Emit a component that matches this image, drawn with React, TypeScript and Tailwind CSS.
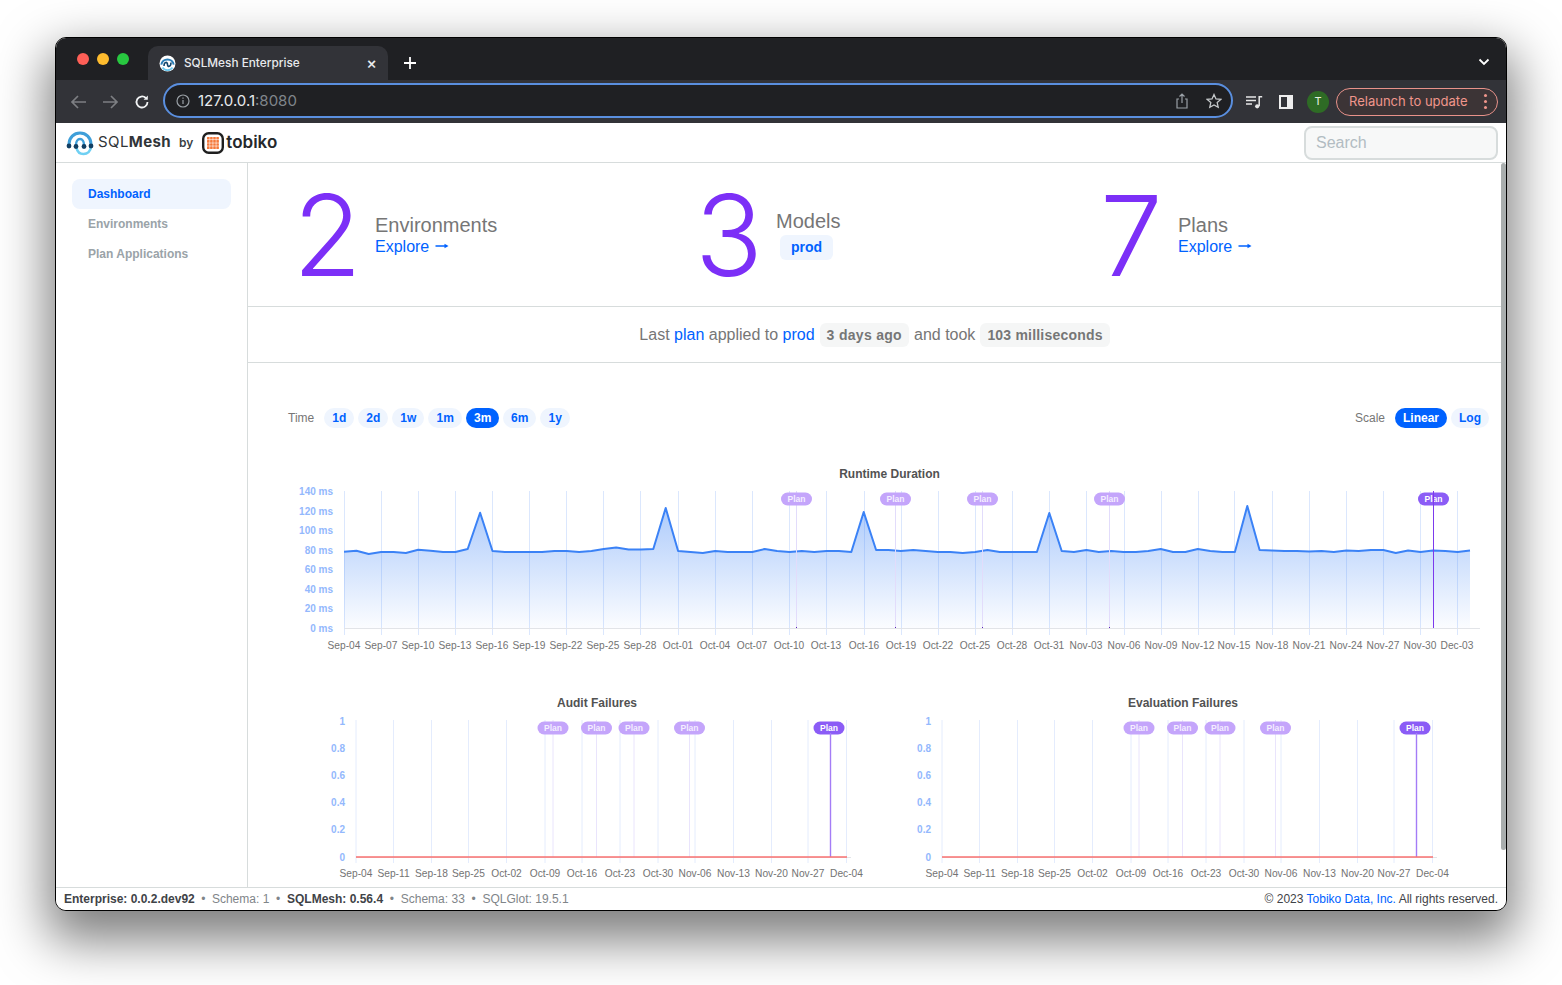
import React from "react";

const sans = "font-['Liberation_Sans',Arial,sans-serif]";
const ui = "font-['Inter',sans-serif]";

const mainLabels = ["Sep-04","Sep-07","Sep-10","Sep-13","Sep-16","Sep-19","Sep-22","Sep-25","Sep-28","Oct-01","Oct-04","Oct-07","Oct-10","Oct-13","Oct-16","Oct-19","Oct-22","Oct-25","Oct-28","Oct-31","Nov-03","Nov-06","Nov-09","Nov-12","Nov-15","Nov-18","Nov-21","Nov-24","Nov-27","Nov-30","Dec-03"];
const mainTicks = [344,381,418,455,492,529,566,603,640,678,715,752,789,826,864,901,938,975,1012,1049,1086,1124,1161,1198,1234,1272,1309,1346,1383,1420,1457];
const series = [551.7,550.7,554,552,552,553,549.7,550.7,552,552,549,512.7,551,552,552,552,552,551,551,552,551,549,547.5,549.5,549.5,549,508,551,552,553,551,552,552,552,549,551,552,551,552,551,551,552,512,550,550,551,550,551,552,552,553,552,550,552,552,552,552,513,551,552,550,552,551,552,552,551,549,552,552,549,551,552,552,506,550,550.5,551,551,551.5,551,552,550.5,551,550,550,553,550.5,552,550.5,551,552,550.5];
const pts = series.map((y, i) => [344 + (i * 1126) / 91, y] as const);
const line = pts.map(([x, y]) => `${x.toFixed(1)},${y}`).join(" ");
const area = `344,628 ${line} 1470,628`;

const subLabels = ["Sep-04","Sep-11","Sep-18","Sep-25","Oct-02","Oct-09","Oct-16","Oct-23","Oct-30","Nov-06","Nov-13","Nov-20","Nov-27","Dec-04"];
const subTicks = [356,393.5,431.5,468.5,506.5,545,582,620,658,695,733.5,771.5,808,846.5];
const subY = [["1",721],["0.8",748],["0.6",775],["0.4",802.5],["0.2",829.5],["0",857]] as const;

function PlanBadge({ x, y, active }: { x: number; y: number; active?: boolean }) {
  return (
    <g>
      <rect x={x - 15.5} y={y - 6.5} width={31} height={13} rx={6.5} fill={active ? "#8b5cf6" : "#c4a5fb"} />
      <text x={x} y={y + 3} textAnchor="middle" fontSize="8.5" fontWeight="700" fill={active ? "#ffffff" : "#f4eeff"}>Plan</text>
    </g>
  );
}

function MainChart() {
  const plans = [796, 895, 982, 1109];
  return (
    <svg viewBox="248 460 1253 195" className={`block w-[1253px] h-[195px] ${sans}`}>
      <defs>
        <linearGradient id="fillArea" x1="0" y1="0" x2="0" y2="1">
          <stop offset="0%" stopColor="#3b82f6" stopOpacity="0.42" />
          <stop offset="100%" stopColor="#3b82f6" stopOpacity="0.02" />
        </linearGradient>
      </defs>
      <text x={889.5} y={478} textAnchor="middle" fontSize="12" fontWeight="700" fill="#525252">Runtime Duration</text>
      {[0,20,40,60,80,100,120,140].map((v, i) => (
        <text key={v} x={333} y={631.5 - i * 19.5} textAnchor="end" fontSize="10" fontWeight="700" fill="#93b8fd">{v} ms</text>
      ))}
      {mainTicks.map((x) => (
        <line key={x} x1={x + 0.5} x2={x + 0.5} y1={491} y2={635} stroke="#dbe7fd" strokeWidth="1" />
      ))}
      <polygon points={area} fill="url(#fillArea)" />
      <line x1={344} x2={1480} y1={628.5} y2={628.5} stroke="#e2e4e8" />
      <polyline points={line} fill="none" stroke="#3b82f6" strokeWidth="2" strokeLinejoin="round" />
      {plans.map((x) => (
        <g key={x}>
          <line x1={x + 0.5} x2={x + 0.5} y1={491} y2={628} stroke="#e2dcfb" />
          <rect x={x} y={627} width={1} height={1} fill="#5b21b6" />
          <PlanBadge x={x + 0.5} y={499} />
        </g>
      ))}
      <PlanBadge x={1433.5} y={499} active />
      <line x1={1433.5} x2={1433.5} y1={491} y2={628} stroke="#7c3aed" strokeWidth="1" />
      {mainLabels.map((l, i) => (
        <text key={l} x={mainTicks[i]} y={648.5} textAnchor="middle" fontSize="10.2" fill="#737373">{l}</text>
      ))}
    </svg>
  );
}

function SubChart({ title, dx, ox, w }: { title: string; dx: number; ox: number; w: number }) {
  const plans = [553, 596.5, 634, 689.5];
  return (
    <svg viewBox={`${ox} 690 ${w} 190`} width={w} height={190} className={`block shrink-0 ${sans}`}>
      <text x={597 + dx} y={707} textAnchor="middle" fontSize="12" fontWeight="700" fill="#525252">{title}</text>
      {subY.map(([l, y]) => (
        <text key={l} x={345 + dx} y={y + 3.5} textAnchor="end" fontSize="10" fontWeight="700" fill="#93b8fd">{l}</text>
      ))}
      {subTicks.map((x) => (
        <line key={x} x1={x + dx} x2={x + dx} y1={720} y2={863} stroke="#e4ecfd" />
      ))}
      <line x1={356 + dx} x2={851 + dx} y1={857.5} y2={857.5} stroke="#e2e4e8" />
      {plans.map((x) => (
        <g key={x}>
          <line x1={x + dx} x2={x + dx} y1={720} y2={857} stroke="#e9e4fc" />
          <PlanBadge x={x + dx} y={728} />
        </g>
      ))}
      <PlanBadge x={829 + dx} y={728} active />
      <line x1={830.5 + dx} x2={830.5 + dx} y1={733} y2={857} stroke="#a47cf6" strokeWidth="1.4" />
      <line x1={356 + dx} x2={847 + dx} y1={857} y2={857} stroke="#f87171" strokeWidth="1.4" />
      {subLabels.map((l, i) => (
        <text key={l} x={subTicks[i] + dx} y={877} textAnchor="middle" fontSize="10.2" fill="#737373">{l}</text>
      ))}
    </svg>
  );
}

function Favicon() {
  return (
    <svg width="17" height="17" viewBox="0 0 17 17">
      <circle cx="8.5" cy="8.5" r="8" fill="#fff" />
      <path d="M2.300 9.600a6.300 6.300 0 0 1 12.400 0" fill="none" stroke="#2b7fb8" strokeWidth="2" />
      <path d="M5 11c0-4.500 3.500-4.500 3.500-1.500S12 12 12 7.500" fill="none" stroke="#12466d" strokeWidth="1.600" />
      <path d="M3.500 12.500a6 6 0 0 0 10 0" fill="none" stroke="#6dc8ee" strokeWidth="1.800" />
    </svg>
  );
}

function SqlMeshLogo() {
  return (
    <svg width="28" height="26" viewBox="0 0 28 26">
      <path d="M3 14C3 7.500 8 3 14 3s11 4.500 11 11" fill="none" stroke="#3f9fd9" strokeWidth="3" />
      <path d="M10 15c0-3.500 1.700-6 4-6s4 2.500 4 6" fill="none" stroke="#3f9fd9" strokeWidth="2.400" />
      <path d="M10.500 18c.8 3.500 3.500 6 7 6 4 0 7-3 7.500-7" fill="none" stroke="#6fd0f3" strokeWidth="2.600" />
      <g fill="#123f63">
        <circle cx="3" cy="16" r="2.400" /><circle cx="10" cy="16.500" r="2.400" /><circle cx="18" cy="16.500" r="2.400" /><circle cx="25" cy="16" r="2.400" />
      </g>
    </svg>
  );
}

function TobikoLogo() {
  const cells = [0, 1, 2, 3];
  return (
    <svg width="22" height="22" viewBox="0 0 22 22">
      <rect x="1.200" y="1.200" width="19.600" height="19.600" rx="5.500" fill="#fff" stroke="#1f1f1f" strokeWidth="2.400" />
      {cells.map((r) => cells.map((c) => (
        <rect key={`${r}-${c}`} x={5 + c * 3.1} y={5 + r * 3.1} width={2.600} height={2.600} rx={0.5} fill="#f5793b" />
      )))}
    </svg>
  );
}

function ChromeIcons() {
  return (
    <div className="flex items-center">
      <svg width="18" height="16" viewBox="0 0 18 16" className="ml-[12px] text-[#e6e6e6]" fill="none" stroke="currentColor" strokeWidth="1.500">
        <path d="M1 3h10M1 6.500h10M1 10h6" />
        <path d="M14.200 12V2.700h3" />
        <circle cx="12.200" cy="12.300" r="2.100" fill="currentColor" stroke="none" />
      </svg>
      <div className="ml-[16px] w-[14px] h-[14px] border-2 border-[#eeeeee] border-r-[6px]" />
      <div className={`ml-[14px] w-[22px] h-[22px] rounded-full bg-[#2e6b25] text-[#e6f2e2] flex items-center justify-center text-[11px] ${ui}`}>T</div>
    </div>
  );
}

function Pill({ children, active, w }: { children: React.ReactNode; active?: boolean; w: string }) {
  return (
    <span className={`${w} h-5 rounded-full flex items-center justify-center text-xs font-bold ${active ? "bg-[#0062ff] text-white" : "bg-[#eff5fe] text-[#0062ff]"}`}>{children}</span>
  );
}

function Arrow() {
  return (
    <svg width="14" height="10" viewBox="0 0 14 10" className="inline-block ml-[6px] mb-[2px]">
      <path d="M0.500 5H12" stroke="#0062ff" strokeWidth="1.300" />
      <path d="M9.500 2.800 13.500 5 9.500 7.200Z" fill="#0062ff" />
    </svg>
  );
}

function Digit({ children, pos }: { children: React.ReactNode; pos: string }) {
  return <span className={`${pos} text-[112px] leading-none text-[#7c2ff7] font-[285] ${ui}`}>{children}</span>;
}

export default function App() {
  return (
    <div className="w-[1562px] h-[985px] bg-white pl-[55px] pt-[37px] overflow-hidden">
      <div className={`w-[1452px] h-[874px] rounded-[11px] border border-black overflow-hidden flex flex-col bg-white shadow-[0_22px_50px_8px_rgba(0,0,0,0.5)] ${sans}`}>
        <div className="h-[42px] shrink-0 bg-[#1f2023] flex items-end relative">
          <div className="flex items-center gap-[8px] pl-[21px] pb-[15px] w-[92px]">
            <span className="w-3 h-3 rounded-full bg-[#fe5f57]" />
            <span className="w-3 h-3 rounded-full bg-[#febc2e]" />
            <span className="w-3 h-3 rounded-full bg-[#28c840]" />
          </div>
          <div className={`w-[240px] h-[34px] rounded-t-[10px] bg-[#323338] flex items-center pl-[11px] pr-[11px] text-[#e8eaed] text-[11.800px] font-medium ${ui}`}>
            <Favicon />
            <span className="ml-[8px] pt-[1px] flex-1">SQLMesh Enterprise</span>
            <span className="text-[#e8eaed] text-[16px] leading-none">×</span>
          </div>
          <svg width="14" height="14" viewBox="0 0 14 14" className="ml-[15px] mb-[10px]"><path d="M7 1v12M1 7h12" stroke="#fff" strokeWidth="1.800" /></svg>
          <svg width="12" height="8" viewBox="0 0 12 8" className="ml-auto mr-[16px] mb-[14px]"><path d="M1.500 1.500 6 6l4.500-4.500" fill="none" stroke="#fff" strokeWidth="1.800" /></svg>
        </div>
        <div className="h-[43px] shrink-0 bg-[#323338] flex items-center relative">
          <svg width="18" height="16" viewBox="0 0 18 16" className="ml-[14px] text-[#7d7f83]" fill="none" stroke="currentColor" strokeWidth="1.700"><path d="M16 8H2M8 2 2 8l6 6" /></svg>
          <svg width="18" height="16" viewBox="0 0 18 16" className="ml-[13px] text-[#7d7f83]" fill="none" stroke="currentColor" strokeWidth="1.700"><path d="M2 8h14M10 2l6 6-6 6" /></svg>
          <svg width="16" height="16" viewBox="0 0 16 16" className="ml-[15px] text-[#f1f3f4]" fill="none" stroke="currentColor" strokeWidth="1.800"><path d="M13.500 8a5.500 5.500 0 1 1-1.700-4" /><path d="M13.800 1.500v4.200H9.600" fill="currentColor" stroke="none" /></svg>
          <div className={`ml-[13px] mb-[2px] w-[1070px] h-[35px] rounded-full border-2 border-[#5a8fdf] bg-[#1f2023] flex items-center pl-[11px] pr-[9px] ${ui}`}>
            <svg width="14" height="14" viewBox="0 0 14 14" fill="none" stroke="#9aa0a6" strokeWidth="1.200"><circle cx="7" cy="7" r="6" /><path d="M7 6v4M7 3.500v1.300" /></svg>
            <span className="ml-[8px] pt-[2px] text-[15px] text-[#e8eaed]">127.0.0.1<span className="text-[#80868b]">:8080</span></span>
            <svg width="14" height="16" viewBox="0 0 14 16" className="ml-auto" fill="none" stroke="#9aa0a6" strokeWidth="1.200"><path d="M4 6H2v9h10V6h-2M7 10V1.500M4.500 3.500 7 1l2.500 2.500" /></svg>
            <svg width="16" height="16" viewBox="0 0 16 16" className="ml-[17px]" fill="none" stroke="#c4c7c9" strokeWidth="1.300"><path d="m8 1.500 2 4.400 4.800.5-3.600 3.200 1 4.700L8 11.900l-4.200 2.400 1-4.700-3.600-3.200 4.800-.5Z" /></svg>
          </div>
          <ChromeIcons />
          <div className={`ml-[7px] w-[162px] h-[28px] rounded-full border border-[#e8928a] bg-[#3c3436] flex items-center pl-[12px] pr-[10px] text-[13px] text-[#f0968c] ${ui}`}>
            <span className="flex-1">Relaunch to update</span>
            <span className="flex flex-col gap-[3px]"><i className="block w-[3px] h-[3px] rounded-full bg-[#f0968c]" /><i className="block w-[3px] h-[3px] rounded-full bg-[#f0968c]" /><i className="block w-[3px] h-[3px] rounded-full bg-[#f0968c]" /></span>
          </div>
        </div>
        <div className="h-[40px] shrink-0 bg-white border-b border-[#d7dcdc] flex items-center pl-[10px] pr-[8px]">
          <SqlMeshLogo />
          <span className={`ml-[4px] text-[15px] text-[#303438] tracking-[0.4px] ${ui}`}>SQL<span className="font-bold">Mesh</span></span>
          <span className={`ml-[8px] text-[12px] font-semibold text-[#3b3f44] ${ui}`}>by</span>
          <span className="ml-[9px]"><TobikoLogo /></span>
          <span className={`ml-[2px] text-[17px] font-semibold text-[#26282b] ${ui}`}>tobiko</span>
          <div className="ml-auto w-[194px] h-[34px] rounded-lg border-2 border-[#d7dcdc] bg-[#f7f8f8] flex items-center pl-[10px] text-[16px] text-[#b2bcc2]">Search</div>
        </div>
        <div className="flex-1 min-h-0 flex relative">
          <div className="w-[192px] shrink-0 border-r border-[#d7dcdc] pt-[16px] px-[16px] flex flex-col text-[12px] font-bold">
            <div className="h-[30px] w-[159px] rounded-lg bg-[#eff5fe] text-[#0062ff] flex items-center pl-[16px]">Dashboard</div>
            <div className="h-[30px] text-[#9aa3a8] flex items-center pl-[16px]">Environments</div>
            <div className="h-[30px] text-[#9aa3a8] flex items-center pl-[16px]">Plan Applications</div>
          </div>
          <div className="flex-1 min-w-0 flex overflow-hidden">
            <div className="w-[1253px] shrink-0 flex flex-col">
              <div className="h-[144px] shrink-0 border-b border-[#d7dcdc] pl-[47px] grid grid-cols-[401px_402px_1fr] items-center">
                <div className="flex items-center">
                  <Digit pos="-ml-[2px] w-[80px]">2</Digit>
                  <div className="ml-[2px]">
                    <div className="text-[20px] leading-[24px] text-[#767676]">Environments</div>
                    <div className="text-[16px] leading-[20px] text-[#0062ff]">Explore<Arrow /></div>
                  </div>
                </div>
                <div className="flex items-center">
                  <Digit pos="-ml-[1px] w-[79px]">3</Digit>
                  <div className="ml-[2px]">
                    <div className="text-[20px] leading-[24px] text-[#767676]">Models</div>
                    <span className="ml-[4px] mt-[2px] flex items-center justify-center w-[53px] h-[25px] rounded-md bg-[#eff5fe] text-[14px] font-bold text-[#0062ff]">prod</span>
                  </div>
                </div>
                <div className="flex items-center">
                  <Digit pos="ml-[2px] w-[76px]">7</Digit>
                  <div className="ml-[2px]">
                    <div className="text-[20px] leading-[24px] text-[#767676]">Plans</div>
                    <div className="text-[16px] leading-[20px] text-[#0062ff]">Explore<Arrow /></div>
                  </div>
                </div>
              </div>
              <div className="h-[56px] shrink-0 pt-[1px] border-b border-[#d7dcdc] flex items-center justify-center text-[16px] text-[#767676]">
                <span>Last <span className="text-[#0062ff]">plan</span> applied to <span className="text-[#0062ff]">prod</span></span>
                <span className="ml-[5px] h-[24px] px-[7px] rounded-md bg-[#f5f6f6] text-[14px] font-bold tracking-[0.3px] flex items-center">3 days ago</span>
                <span className="ml-[5px]">and took</span>
                <span className="ml-[5px] h-[24px] px-[7px] rounded-md bg-[#f5f6f6] text-[14px] font-bold tracking-[0.2px] flex items-center">103 milliseconds</span>
              </div>
              <div className="h-[20px] mt-[45px] shrink-0 pl-[40px] pr-[12px] flex items-center gap-[4px]">
                <span className="text-[12px] text-[#767676] mr-[6px]">Time</span>
                <Pill w="w-[30px]">1d</Pill>
                <Pill w="w-[30px]">2d</Pill>
                <Pill w="w-[32px]">1w</Pill>
                <Pill w="w-[34px]">1m</Pill>
                <Pill w="w-[33px]" active>3m</Pill>
                <Pill w="w-[33px]">6m</Pill>
                <Pill w="w-[30px]">1y</Pill>
                <span className="ml-auto text-[12px] text-[#767676] mr-[6px]">Scale</span>
                <Pill w="w-[52px]" active>Linear</Pill>
                <Pill w="w-[38px]">Log</Pill>
              </div>
              <div className="mt-[32px] shrink-0"><MainChart /></div>
              <div className="mt-[35px] shrink-0 flex">
                <SubChart title="Audit Failures" dx={0} ox={248} w={627} />
                <SubChart title="Evaluation Failures" dx={586} ox={875} w={626} />
              </div>
            </div>
            <div className="w-[5px] shrink-0 bg-white"><div className="h-[687px] bg-[#a9aeae] rounded-full" /></div>
          </div>
        </div>
        <div className="h-[23px] shrink-0 border-t border-[#d7dcdc] bg-white flex items-center pl-[8px] pr-[8px] text-[12px] text-[#7f8589]">
          <b className="text-[#3f4347]">Enterprise: 0.0.2.dev92</b>
          <span className="mx-[6.500px]">•</span><span>Schema: 1</span>
          <span className="mx-[6.750px]">•</span><b className="text-[#3f4347]">SQLMesh: 0.56.4</b>
          <span className="mx-[6.750px]">•</span><span>Schema: 33</span>
          <span className="mx-[6.750px]">•</span><span>SQLGlot: 19.5.1</span>
          <span className="ml-auto text-[#3f4347]">© 2023 <span className="text-[#0062ff]">Tobiko Data, Inc.</span> All rights reserved.</span>
        </div>
      </div>
    </div>
  );
}
